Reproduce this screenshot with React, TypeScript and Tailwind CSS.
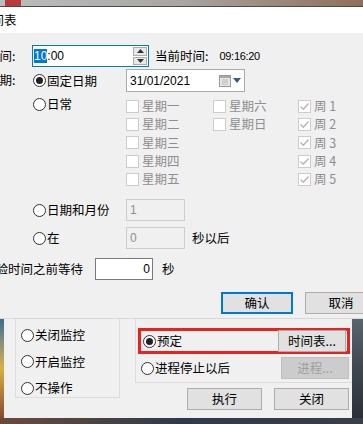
import React from "react";

const cjk = "font-['Noto_Sans_CJK_SC','Microsoft_YaHei',sans-serif]";
const latin = "font-['Liberation_Sans',Arial,sans-serif]";

function Radio({ checked, label }: { checked?: boolean; label: string }) {
  return (
    <div className="flex items-center">
      <span className="w-[13px] h-[13px] rounded-full border border-[#333] bg-white flex items-center justify-center shrink-0">
        {checked && <span className="w-[7px] h-[7px] rounded-full bg-[#222]" />}
      </span>
      <span className="ml-[1px] text-[12.5px] leading-[16px] whitespace-nowrap">{label}</span>
    </div>
  );
}

function Check({ checked, label }: { checked?: boolean; label: string }) {
  return (
    <div className="flex items-center h-[18.3px]">
      <span className="w-[13px] h-[13px] border border-[#cccccc] bg-white flex items-center justify-center shrink-0">
        {checked && (
          <svg width="11" height="11" viewBox="0 0 11 11">
            <path d="M1.5 5.5 L4.3 8.2 L9.5 2.5" fill="none" stroke="#b4b4b4" strokeWidth="1.3" />
          </svg>
        )}
      </span>
      <span className="ml-[3px] text-[12.5px] leading-[16px] text-[#8e8e8e] whitespace-nowrap">{label}</span>
    </div>
  );
}

function Btn({ label, primary, disabled, w = "w-[72px]" }: { label: string; primary?: boolean; disabled?: boolean; w?: string }) {
  return (
    <div
      className={
        "h-[22px] shrink-0 flex items-center justify-center text-[12.5px] " +
        w +
        (primary
          ? " border-2 border-[#0078d7] bg-[#e1e1e1]"
          : disabled
          ? " border border-[#bfbfbf] bg-[#cccccc] text-[#a0a0a0]"
          : " border border-[#adadad] bg-[#e1e1e1]")
      }
    >
      {label}
    </div>
  );
}

export default function App() {
  return (
    <div className={"w-[363px] h-[424px] overflow-hidden flex flex-col bg-[#f0f0f0] text-black " + cjk}>
      {/* strip of desktop above the dialog */}
      <div className="h-[7px] shrink-0 flex bg-gradient-to-r from-[#bdbdbd] via-[#a9a6a2] to-[#8e6e5c] border-b border-[#4a4a4a]">
        <div className="ml-[5px] w-[16px] bg-[#b83a3a]" />
      </div>

      {/* dialog */}
      <div className="h-[311px] shrink-0 flex flex-col">
        <div className="h-[26px] bg-white flex items-center overflow-hidden">
          <span className="ml-[-21px] text-[12.5px] whitespace-nowrap">时间表</span>
        </div>
        <div className="flex-1 bg-[#f0f0f0] flex flex-col">
          {/* time */}
          <div className="flex items-center mt-[12px] h-[22px]">
            <div className="w-[32px] shrink-0 overflow-hidden">
              <div className="ml-[-13px] text-[12.5px] whitespace-nowrap">时间:</div>
            </div>
            <div className="w-[117px] h-[22px] border border-[#0078d7] bg-white flex items-center">
              <span className={"ml-[1px] text-[12px] " + latin}>
                <span className="bg-[#0078d7] text-white">10</span>:00
              </span>
              <div className="ml-auto mr-[1px] w-[14px] h-[18px] flex flex-col gap-[1px]">
                <div className="flex-1 border border-[#adadad] bg-[#e8e8e8] flex items-center justify-center">
                  <svg width="7" height="4" viewBox="0 0 7 4"><path d="M0 4 L3.5 0 L7 4 Z" fill="#333" /></svg>
                </div>
                <div className="flex-1 border border-[#adadad] bg-[#e8e8e8] flex items-center justify-center">
                  <svg width="7" height="4" viewBox="0 0 7 4"><path d="M0 0 L3.5 4 L7 0 Z" fill="#333" /></svg>
                </div>
              </div>
            </div>
            <span className="ml-[6px] text-[12.5px] whitespace-nowrap">当前时间:</span>
            <span className={"ml-[11px] text-[11px] tracking-[-0.3px] " + latin}>09:16:20</span>
          </div>

          {/* date */}
          <div className="flex items-center mt-[2px] h-[23px]">
            <div className="w-[32px] shrink-0 overflow-hidden">
              <div className="ml-[-13px] text-[12.5px] whitespace-nowrap">日期:</div>
            </div>
            <div className="w-[94px] pl-[1px]">
              <Radio checked label="固定日期" />
            </div>
            <div className="w-[119px] h-[23px] border border-[#aaaaaa] bg-white flex items-center">
              <span className={"ml-[3px] text-[12px] " + latin}>31/01/2021</span>
              <div className="ml-auto mr-[3px] flex items-center gap-[2px]">
                <svg width="12" height="12" viewBox="0 0 12 12">
                  <rect x="0.5" y="0.5" width="11" height="11" fill="#e6e6e6" stroke="#9a9a9a" />
                  <rect x="1" y="1" width="10" height="2" fill="#a8a8a8" />
                  <path d="M3 5 H9 M3 7 H9 M3 9 H9" stroke="#b8b8b8" />
                </svg>
                <svg width="8" height="5" viewBox="0 0 8 5"><path d="M0 0 L4 5 L8 0 Z" fill="#3a5a88" /></svg>
              </div>
            </div>
          </div>

          {/* daily */}
          <div className="flex mt-[5px]">
            <div className="w-[32px]" />
            <div className="w-[94px] pl-[1px] mt-[-1px]">
              <Radio label="日常" />
            </div>
            <div className="w-[87px] flex flex-col">
              <Check label="星期一" />
              <Check label="星期二" />
              <Check label="星期三" />
              <Check label="星期四" />
              <Check label="星期五" />
            </div>
            <div className="w-[85px] flex flex-col">
              <Check label="星期六" />
              <Check label="星期日" />
            </div>
            <div className="flex flex-col">
              <Check checked label="周 1" />
              <Check checked label="周 2" />
              <Check checked label="周 3" />
              <Check checked label="周 4" />
              <Check checked label="周 5" />
            </div>
          </div>

          {/* date and month */}
          <div className="flex items-center mt-[11px] h-[22px]">
            <div className="w-[32px]" />
            <div className="w-[94px] pl-[1px]">
              <Radio label="日期和月份" />
            </div>
            <div className="w-[59px] h-[22px] border border-[#cccccc] bg-[#f0f0f0] flex items-center">
              <span className={"ml-[3px] text-[12px] text-[#8e8e8e] " + latin}>1</span>
            </div>
          </div>

          {/* at */}
          <div className="flex items-center mt-[6px] h-[22px]">
            <div className="w-[32px]" />
            <div className="w-[94px] pl-[1px]">
              <Radio label="在" />
            </div>
            <div className="w-[59px] h-[22px] border border-[#cccccc] bg-[#f0f0f0] flex items-center">
              <span className={"ml-[3px] text-[12px] text-[#8e8e8e] " + latin}>0</span>
            </div>
            <span className="ml-[7px] text-[12.5px]">秒以后</span>
          </div>

          {/* wait */}
          <div className="flex items-center mt-[9px] h-[22px]">
            <div className="w-[84px] shrink-0 overflow-hidden">
              <div className="ml-[-17px] text-[12.5px] whitespace-nowrap">检验时间之前等待</div>
            </div>
            <div className="ml-[11px] w-[58px] h-[22px] border border-[#7a7a7a] bg-white flex items-center justify-end">
              <span className={"mr-[2px] text-[12px] " + latin}>0</span>
            </div>
            <span className="ml-[9px] text-[12.5px]">秒</span>
          </div>

          {/* dialog buttons */}
          <div className="flex mt-[12px] ml-[221px] gap-[12px]">
            <Btn primary label="确认" />
            <Btn label="取消" />
          </div>
        </div>
      </div>

      {/* window underneath */}
      <div className="h-[100px] shrink-0 flex border-t border-[#d8d8d8]">
        <div className="w-[4px] bg-gradient-to-b from-[#3b6b8c] via-[#d8b040] to-[#8a4a30]" />
        <div className="flex-1 bg-[#f0f0f0] flex">
          <div className="ml-[11px] w-[105px] h-[79px] border-x border-b border-[#dcdcdc] flex flex-col pl-[5px] pt-[8px] gap-[10.5px]">
            <Radio label="关闭监控" />
            <Radio label="开启监控" />
            <Radio label="不操作" />
          </div>
          <div className="ml-[15px] flex-1 flex flex-col">
            <div className="h-[64px] border-l border-b border-[#dcdcdc] flex flex-col">
              <div className="mt-[9px] ml-[2px] mr-[2px] h-[26px] border-[3px] border-[#e8231f] flex items-center pl-[2px] pr-[1px]">
                <Radio checked label="预定" />
                <div className="ml-auto">
                  <Btn label="时间表..." w="w-[68px]" />
                </div>
              </div>
              <div className="mt-[3px] ml-[5px] mr-[3px] flex items-center">
                <Radio label="进程停止以后" />
                <div className="ml-auto">
                  <Btn disabled label="进程..." w="w-[68px]" />
                </div>
              </div>
            </div>
            <div className="flex mt-[5px] ml-[52px] gap-[12px]">
              <Btn label="执行" w="w-[75px]" />
              <Btn label="关闭" w="w-[75px]" />
            </div>
          </div>
        </div>
        <div className="w-[11px] bg-gradient-to-b from-[#5a6470] via-[#3e4650] to-[#2c3038]" />
      </div>
      <div className="flex-1 bg-gradient-to-r from-[#6a4a3a] via-[#2e3a4a] to-[#3a3e48]" />
    </div>
  );
}
